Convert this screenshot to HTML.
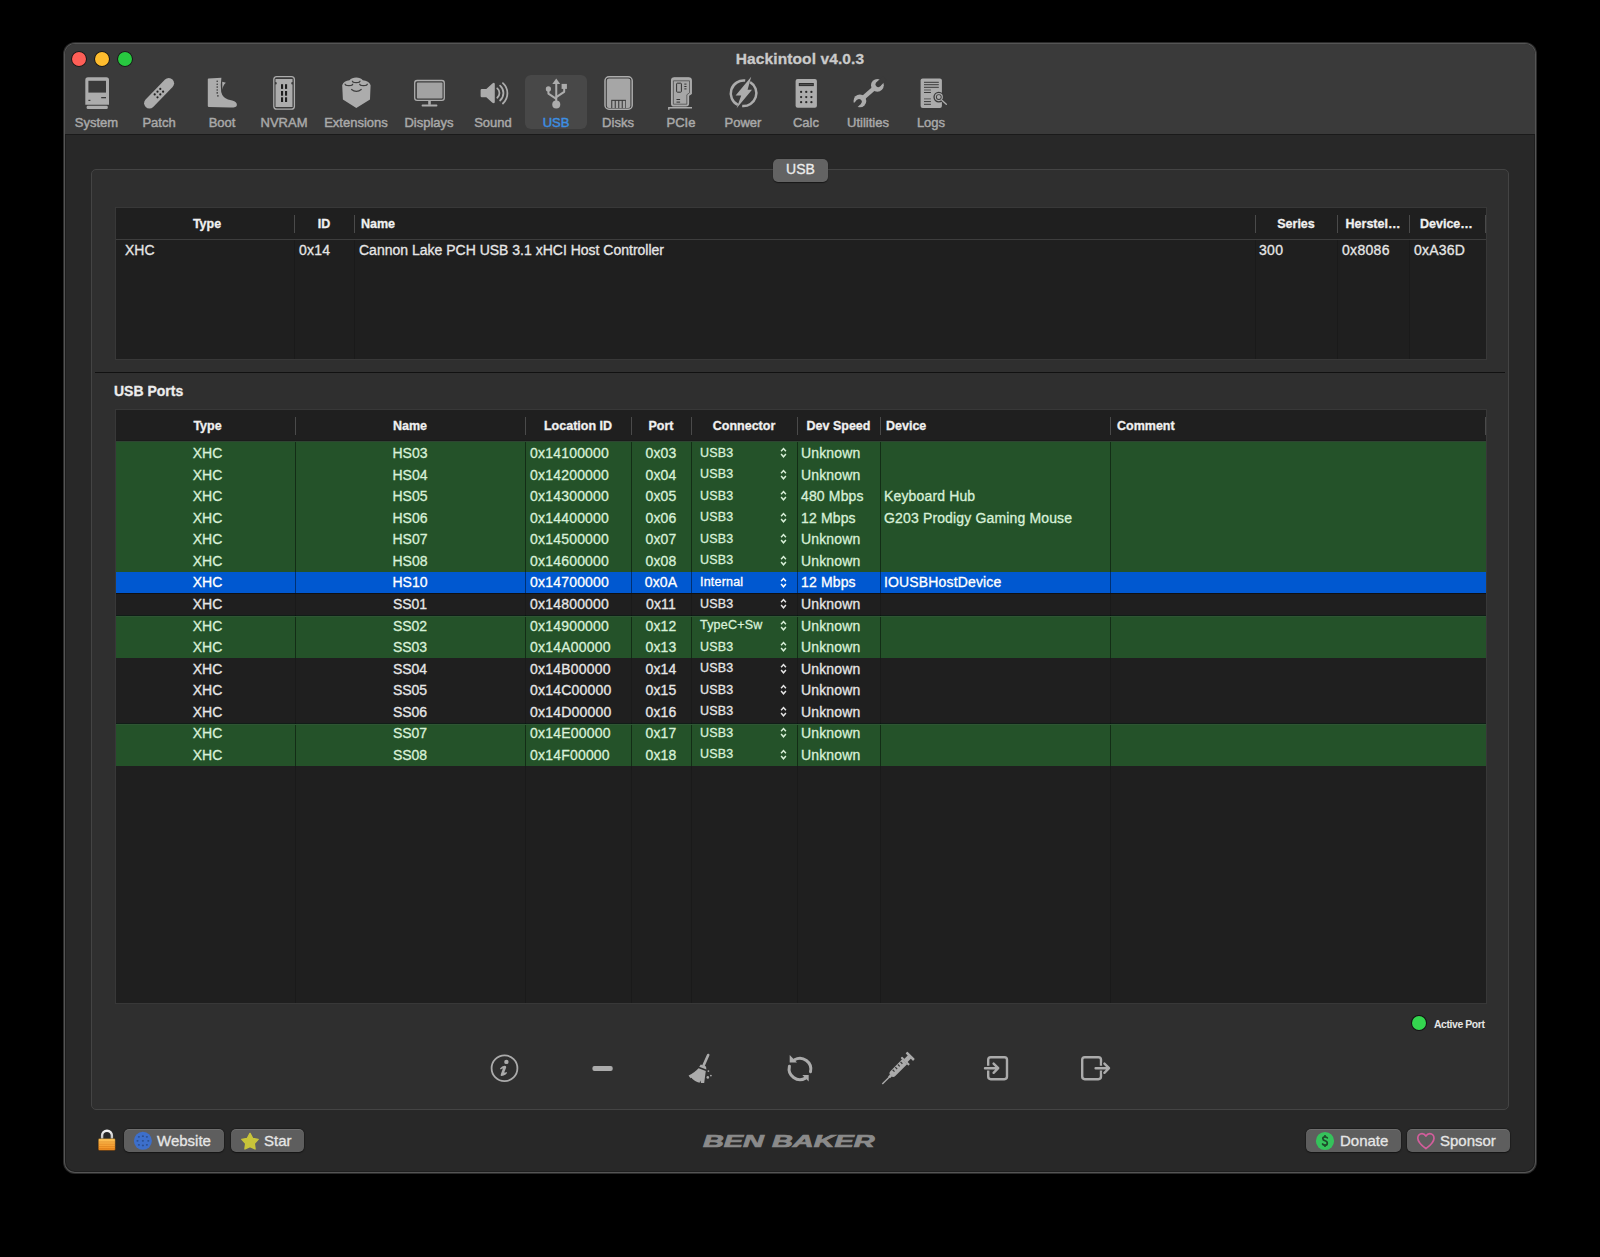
<!DOCTYPE html>
<html><head><meta charset="utf-8"><title>Hackintool</title><style>
*{box-sizing:border-box;margin:0;padding:0}
html,body{width:1600px;height:1257px;overflow:hidden;background:#000;font-family:"Liberation Sans", sans-serif}
.a{position:absolute}
.t{position:absolute;white-space:nowrap;line-height:1;-webkit-text-stroke:0.3px currentColor}
</style></head>
<body>
<div class="a" style="left:64px;top:43px;width:1472px;height:1130px;border-radius:11px;background:#282828;box-shadow:0 0 0 1px #2a2a2a,inset 0 0 0 1px #555,inset 0 0 0 2px #1e1e1e;overflow:hidden"><div class="a" style="left:1px;top:1px;width:1470px;height:90px;background:#3a3a3a;border-radius:10px 10px 0 0"></div><div class="a" style="left:1px;top:91px;width:1470px;height:1px;background:#1a1a1a"></div></div><div class="a" style="left:72.2px;top:52px;width:14px;height:14px;border-radius:50%;background:#fe5f57;box-shadow:0 0 0 0.8px rgba(0,0,0,.7)"></div><div class="a" style="left:95.1px;top:52px;width:14px;height:14px;border-radius:50%;background:#febc2e;box-shadow:0 0 0 0.8px rgba(0,0,0,.7)"></div><div class="a" style="left:117.9px;top:52px;width:14px;height:14px;border-radius:50%;background:#28c840;box-shadow:0 0 0 0.8px rgba(0,0,0,.7)"></div><div class="t" style="left:0;width:1600px;text-align:center;top:50.5px;font-size:15.5px;font-weight:700;color:#cacaca;letter-spacing:0.1px">Hackintool v4.0.3</div><div class="a" style="left:525px;top:75px;width:62px;height:54px;border-radius:6px;background:#484848"></div><div class="t" style="left:36.5px;width:120px;text-align:center;top:116.2px;font-size:13px;color:#a9a9a9;-webkit-text-stroke:0.45px #a9a9a9">System</div><div class="t" style="left:99px;width:120px;text-align:center;top:116.2px;font-size:13px;color:#a9a9a9;-webkit-text-stroke:0.45px #a9a9a9">Patch</div><div class="t" style="left:162px;width:120px;text-align:center;top:116.2px;font-size:13px;color:#a9a9a9;-webkit-text-stroke:0.45px #a9a9a9">Boot</div><div class="t" style="left:224px;width:120px;text-align:center;top:116.2px;font-size:13px;color:#a9a9a9;-webkit-text-stroke:0.45px #a9a9a9">NVRAM</div><div class="t" style="left:296px;width:120px;text-align:center;top:116.2px;font-size:13px;color:#a9a9a9;-webkit-text-stroke:0.45px #a9a9a9">Extensions</div><div class="t" style="left:369px;width:120px;text-align:center;top:116.2px;font-size:13px;color:#a9a9a9;-webkit-text-stroke:0.45px #a9a9a9">Displays</div><div class="t" style="left:433px;width:120px;text-align:center;top:116.2px;font-size:13px;color:#a9a9a9;-webkit-text-stroke:0.45px #a9a9a9">Sound</div><div class="t" style="left:496px;width:120px;text-align:center;top:116.2px;font-size:13px;color:#3d8fe3;-webkit-text-stroke:0.45px #3d8fe3">USB</div><div class="t" style="left:558px;width:120px;text-align:center;top:116.2px;font-size:13px;color:#a9a9a9;-webkit-text-stroke:0.45px #a9a9a9">Disks</div><div class="t" style="left:621px;width:120px;text-align:center;top:116.2px;font-size:13px;color:#a9a9a9;-webkit-text-stroke:0.45px #a9a9a9">PCIe</div><div class="t" style="left:683px;width:120px;text-align:center;top:116.2px;font-size:13px;color:#a9a9a9;-webkit-text-stroke:0.45px #a9a9a9">Power</div><div class="t" style="left:746px;width:120px;text-align:center;top:116.2px;font-size:13px;color:#a9a9a9;-webkit-text-stroke:0.45px #a9a9a9">Calc</div><div class="t" style="left:808px;width:120px;text-align:center;top:116.2px;font-size:13px;color:#a9a9a9;-webkit-text-stroke:0.45px #a9a9a9">Utilities</div><div class="t" style="left:871px;width:120px;text-align:center;top:116.2px;font-size:13px;color:#a9a9a9;-webkit-text-stroke:0.45px #a9a9a9">Logs</div><svg class="a" style="left:0;top:0" width="1600" height="140" viewBox="0 0 1600 140"><path d="M85.3,80 Q85.3,77.3 88,77.3 L106.3,77.3 Q109,77.3 109,80 L109,104.8 L85.3,104.8 Z" fill="#acacac"/><rect x="88.4" y="80.8" width="17.6" height="11.8" fill="#3a3a3a"/><rect x="88.4" y="99.8" width="2" height="1.2" fill="#3a3a3a"/><rect x="101.2" y="97" width="4.8" height="1.3" fill="#3a3a3a"/><rect x="86.6" y="105.8" width="21.2" height="3.2" rx="1.3" fill="#acacac"/><line x1="149.4" y1="103.2" x2="168.8" y2="83.3" stroke="#acacac" stroke-width="10.6" stroke-linecap="round"/><circle cx="160.3" cy="88.9" r="1.1" fill="#222"/><circle cx="157.5" cy="91.7" r="1.1" fill="#222"/><circle cx="163.1" cy="91.7" r="1.1" fill="#222"/><circle cx="154.7" cy="94.4" r="1.1" fill="#222"/><circle cx="160.3" cy="94.4" r="1.1" fill="#222"/><circle cx="157.5" cy="97.3" r="1.1" fill="#222"/><path d="M208.6,78.4 L221.4,77.8 Q220.2,86 221.2,92 Q222.6,97.6 228,99.4 L232.2,100.6 Q237,102 236.9,105 Q236.8,107.8 230,107.6 L209,107.1 Q207.8,107 207.8,106 L207.8,79.3 Q207.8,78.5 208.6,78.4 Z" fill="#acacac"/><path d="M222.2,81.8 L225.9,82.8 C223.9,84.4 222.8,86.8 222.4,89.8 Z" fill="#acacac"/><circle cx="217.2" cy="81.3" r="0.8" fill="#3a3a3a"/><circle cx="217.2" cy="84.2" r="0.8" fill="#3a3a3a"/><circle cx="217.2" cy="87.1" r="0.8" fill="#3a3a3a"/><circle cx="217.2" cy="90" r="0.8" fill="#3a3a3a"/><circle cx="217.2" cy="92.9" r="0.8" fill="#3a3a3a"/><circle cx="217.89999999999998" cy="95.9" r="0.8" fill="#3a3a3a"/><rect x="273.8" y="76.6" width="20.6" height="32.6" rx="3" fill="none" stroke="#acacac" stroke-width="1.3"/><path d="M275.5,79 L292.5,79 L292.5,82 A1.3,1.3 0 0 0 292.5,84.6 L292.5,107 L275.5,107 L275.5,84.6 A1.3,1.3 0 0 0 275.5,82 Z" fill="#acacac"/><rect x="281" y="84.2" width="2.1" height="4.7" fill="#1e1e1e"/><rect x="285" y="84.2" width="2.1" height="4.7" fill="#1e1e1e"/><rect x="281" y="91" width="2.1" height="4.7" fill="#1e1e1e"/><rect x="285" y="91" width="2.1" height="4.7" fill="#1e1e1e"/><rect x="281" y="97.3" width="2.1" height="4.7" fill="#1e1e1e"/><rect x="285" y="97.3" width="2.1" height="4.7" fill="#1e1e1e"/><path d="M342.2,85.3 C343,82.5 346,80.6 349.5,80.3 C351,78.6 353.5,77.6 356.2,77.6 C359,77.6 361.4,78.6 362.8,80.3 C366.5,80.6 369.8,82.5 370.6,85.3 L370,99.4 L356.3,108 L342.9,99.4 Z" fill="#acacac"/><path d="M352.3,80.8 A3.9,1.9 0 0 0 360.09999999999997,80.8" fill="none" stroke="#3e3e3e" stroke-width="1.2"/><path d="M345.0,83.8 A3.9,1.9 0 0 0 352.79999999999995,83.8" fill="none" stroke="#3e3e3e" stroke-width="1.2"/><path d="M359.6,83.8 A3.9,1.9 0 0 0 367.4,83.8" fill="none" stroke="#3e3e3e" stroke-width="1.2"/><path d="M351.2,89.2 Q356.4,93.4 361.6,89.2" fill="none" stroke="#3e3e3e" stroke-width="1.2"/><rect x="414.7" y="80.5" width="29.6" height="19.8" rx="2.4" fill="none" stroke="#acacac" stroke-width="1.3"/><rect x="416.9" y="82.6" width="25.6" height="15.9" rx="0.8" fill="#a2a2a2"/><rect x="428.2" y="100.8" width="2.6" height="4" fill="#acacac"/><rect x="421.6" y="104.6" width="15.8" height="1.9" rx="0.8" fill="#acacac"/><path d="M481.8,88.9 L486.3,88.9 L492.4,83.4 Q494.5,82 494.8,84 L494.8,102 Q494.5,104 492.4,102.8 L486.3,97.3 L481.8,97.3 Q480.6,97.3 480.6,96 L480.6,90.2 Q480.6,88.9 481.8,88.9 Z" fill="#acacac"/><path d="M497.3,88.4 A6.1,6.1 0 0 1 497.3,97.7" fill="none" stroke="#acacac" stroke-width="1.8" stroke-linecap="round"/><path d="M500.1,85.6 A10,10 0 0 1 500.1,100.5" fill="none" stroke="#acacac" stroke-width="1.8" stroke-linecap="round"/><path d="M502.9,83.2 A13.7,13.7 0 0 1 502.9,103.5" fill="none" stroke="#acacac" stroke-width="1.8" stroke-linecap="round"/><path d="M556.25,78.6 L560.2,84.1 L552.3,84.1 Z" fill="#acacac"/><line x1="556.25" y1="83.5" x2="556.25" y2="102" stroke="#acacac" stroke-width="2"/><circle cx="556.25" cy="104.6" r="4" fill="#acacac"/><circle cx="548.4" cy="88.9" r="2.6" fill="#acacac"/><path d="M548.4,90 L548.4,93.6 L556.25,98.8" fill="none" stroke="#acacac" stroke-width="2" stroke-linejoin="round"/><rect x="561.6" y="83.9" width="5.3" height="5" fill="#acacac"/><path d="M564.2,88 L564.2,91.8 L556.25,97.2" fill="none" stroke="#acacac" stroke-width="2" stroke-linejoin="round"/><rect x="605" y="76.8" width="27.2" height="32.4" rx="4" fill="none" stroke="#acacac" stroke-width="1.5"/><rect x="606.8" y="78.6" width="23.6" height="29.4" rx="2.2" fill="#a6a6a6"/><rect x="611.2" y="99.8" width="14.7" height="8.3" fill="#3c3c3c"/><rect x="612.3" y="100.9" width="2.4" height="7.2" fill="#a6a6a6"/><rect x="615.8" y="100.9" width="2.4" height="7.2" fill="#a6a6a6"/><rect x="619.3" y="100.9" width="2.4" height="7.2" fill="#a6a6a6"/><rect x="622.8" y="100.9" width="2.4" height="7.2" fill="#a6a6a6"/><path d="M671.6,80.5 Q671.6,77.8 674.3,77.8 L688.6,77.8 Q691.3,77.8 691.3,80.5 L691.3,93.6 L688.5,95.6 L688.5,103.6 Q688.5,106 686,106 L674.3,106 Q671.6,106 671.6,103.4 Z" fill="#a6a6a6" stroke="#acacac" stroke-width="1.2"/><path d="M673.4,80.8 L689.5,80.8 L689.5,92.8 L686.8,94.8 L686.8,104.2 L673.4,104.2 Z" fill="none" stroke="#444" stroke-width="0.7"/><rect x="676.6" y="83.2" width="4.8" height="9" rx="0.8" fill="none" stroke="#333" stroke-width="1"/><rect x="684.3" y="83.6" width="2.2" height="1" fill="#333"/><rect x="684.3" y="86" width="2.2" height="1" fill="#333"/><rect x="684.3" y="88.4" width="2.2" height="1" fill="#333"/><rect x="676.5" y="99" width="3.6" height="1" fill="#333"/><rect x="676.5" y="101.6" width="3.6" height="1" fill="#333"/><path d="M668.8,109.8 L668.8,107.8 L692,107.8" fill="none" stroke="#acacac" stroke-width="1.4"/><path d="M745.2,80.6 A12.9,12.9 0 0 0 737.8,104.9" fill="none" stroke="#acacac" stroke-width="2.5"/><path d="M742.2,106 A12.9,12.9 0 0 0 750.1,82.1" fill="none" stroke="#acacac" stroke-width="2.5"/><path d="M751.2,76.8 L735.6,95.6 L741.2,95.6 L736.6,108.2 L752,89.8 L747.6,89.8 Z" fill="#acacac"/><rect x="795.6" y="78.9" width="21.3" height="28.8" rx="2" fill="#acacac"/><rect x="798.8" y="83" width="15" height="3.1" fill="#2e2e2e"/><rect x="799.8" y="84" width="13" height="1.1" fill="#505050"/><circle cx="801.1" cy="91.9" r="1.15" fill="#2a2a2a"/><circle cx="806.25" cy="91.9" r="1.15" fill="#2a2a2a"/><circle cx="811.4" cy="91.9" r="1.15" fill="#2a2a2a"/><circle cx="801.1" cy="97.1" r="1.15" fill="#2a2a2a"/><circle cx="806.25" cy="97.1" r="1.15" fill="#2a2a2a"/><circle cx="811.4" cy="97.1" r="1.15" fill="#2a2a2a"/><circle cx="801.1" cy="102.2" r="1.15" fill="#2a2a2a"/><circle cx="806.25" cy="102.2" r="1.15" fill="#2a2a2a"/><circle cx="811.4" cy="102.2" r="1.15" fill="#2a2a2a"/><line x1="860" y1="100.7" x2="877.2" y2="85.6" stroke="#acacac" stroke-width="4.4"/><circle cx="877.4" cy="85.3" r="6.4" fill="#acacac"/><circle cx="859.9" cy="100.9" r="6.4" fill="#acacac"/><g transform="translate(877.4,85.3) rotate(-45)"><circle cx="1.2" cy="0" r="2.7" fill="#3a3a3a"/><rect x="1.2" y="-2.7" width="9" height="5.4" fill="#3a3a3a"/></g><g transform="translate(859.9,100.9) rotate(135)"><circle cx="1.2" cy="0" r="2.7" fill="#3a3a3a"/><rect x="1.2" y="-2.7" width="9" height="5.4" fill="#3a3a3a"/></g><rect x="920.6" y="78.5" width="21.3" height="29.6" rx="2" fill="#acacac"/><rect x="924" y="81.8" width="14.8" height="1" fill="#3a3a3a"/><rect x="924" y="84.2" width="14.8" height="1" fill="#3a3a3a"/><rect x="924" y="86.8" width="14.8" height="1" fill="#3a3a3a"/><rect x="924" y="92.0" width="6.9" height="1" fill="#3a3a3a"/><rect x="924" y="101.1" width="6.9" height="1" fill="#3a3a3a"/><rect x="924" y="103.8" width="6.9" height="1" fill="#3a3a3a"/><rect x="924" y="89.2" width="6.9" height="1.6" fill="#777"/><rect x="924" y="98.0" width="6.9" height="1.6" fill="#777"/><circle cx="938.8" cy="97.1" r="5.4" fill="#3a3a3a"/><circle cx="938.8" cy="97.1" r="4.1" fill="#acacac"/><circle cx="938.8" cy="97.1" r="2.9" fill="#3a3a3a"/><circle cx="938.8" cy="97.1" r="2" fill="#acacac"/><line x1="941.7" y1="100" x2="946.3" y2="104.2" stroke="#3a3a3a" stroke-width="3"/><line x1="941.9" y1="100.2" x2="946.3" y2="104.2" stroke="#acacac" stroke-width="1.4" stroke-linecap="round"/></svg><div class="a" style="left:91px;top:169px;width:1418px;height:941px;border:1px solid #444;border-radius:5px;background:#2f2f2f"></div><div class="a" style="left:773px;top:159px;width:55px;height:23px;border-radius:5px;background:#636363;box-shadow:0 0.5px 1px rgba(0,0,0,.5)"></div><div class="t" style="left:773px;width:55px;text-align:center;top:162px;font-size:14px;color:#ececec">USB</div><div class="a" style="left:116px;top:208px;width:1370px;height:151px;background:#1f1f1f;box-shadow:0 0 0 1px #383838"></div><div class="a" style="left:294px;top:240px;width:1px;height:119px;background:#1a1a1a"></div><div class="a" style="left:354px;top:240px;width:1px;height:119px;background:#1a1a1a"></div><div class="a" style="left:1255px;top:240px;width:1px;height:119px;background:#1a1a1a"></div><div class="a" style="left:1337px;top:240px;width:1px;height:119px;background:#1a1a1a"></div><div class="a" style="left:1409px;top:240px;width:1px;height:119px;background:#1a1a1a"></div><div class="t" style="top:243.10px;color:#e6e6e6;left:125px;font-size:14px">XHC</div><div class="t" style="top:243.10px;color:#e6e6e6;left:299px;font-size:14px;letter-spacing:0.2px">0x14</div><div class="t" style="top:243.10px;color:#e6e6e6;left:359px;font-size:14px">Cannon Lake PCH USB 3.1 xHCI Host Controller</div><div class="t" style="top:243.10px;color:#e6e6e6;left:1259px;font-size:14px;letter-spacing:0.3px">300</div><div class="t" style="top:243.10px;color:#e6e6e6;left:1342px;font-size:14px;letter-spacing:0.3px">0x8086</div><div class="t" style="top:243.10px;color:#e6e6e6;left:1414px;font-size:14px;letter-spacing:0.2px">0xA36D</div><div class="a" style="left:116px;top:208px;width:1370px;height:32px;background:#1f1f1f"></div><div class="a" style="left:116px;top:239px;width:1370px;height:1px;background:#3d3d3d"></div><div class="t" style="left:118px;width:178px;text-align:center;top:218px;font-size:12.5px;font-weight:700;color:#f0f0f0">Type</div><div class="a" style="left:294px;top:215px;width:1px;height:18px;background:#4a4a4a"></div><div class="t" style="left:294px;width:60px;text-align:center;top:218px;font-size:12.5px;font-weight:700;color:#f0f0f0">ID</div><div class="a" style="left:354px;top:215px;width:1px;height:18px;background:#4a4a4a"></div><div class="t" style="left:361px;top:218px;font-size:12.5px;font-weight:700;color:#f0f0f0">Name</div><div class="a" style="left:1255px;top:215px;width:1px;height:18px;background:#4a4a4a"></div><div class="t" style="left:1255px;width:82px;text-align:center;top:218px;font-size:12.5px;font-weight:700;color:#f0f0f0">Series</div><div class="a" style="left:1337px;top:215px;width:1px;height:18px;background:#4a4a4a"></div><div class="t" style="left:1337px;width:72px;text-align:center;top:218px;font-size:12.5px;font-weight:700;color:#f0f0f0">Herstel…</div><div class="a" style="left:1409px;top:215px;width:1px;height:18px;background:#4a4a4a"></div><div class="t" style="left:1420px;top:218px;font-size:12.5px;font-weight:700;color:#f0f0f0">Device…</div><div class="a" style="left:1485px;top:215px;width:1px;height:18px;background:#4a4a4a"></div><div class="a" style="left:95px;top:372px;width:1410px;height:1px;background:#111"></div><div class="t" style="left:114px;top:384px;font-size:14px;font-weight:700;color:#ececec">USB Ports</div><div class="a" style="left:116px;top:410px;width:1370px;height:593px;background:#1f1f1f;box-shadow:0 0 0 1px #383838"></div><div class="a" style="left:295px;top:441px;width:1px;height:562px;background:#1a1a1a"></div><div class="a" style="left:525px;top:441px;width:1px;height:562px;background:#1a1a1a"></div><div class="a" style="left:631px;top:441px;width:1px;height:562px;background:#1a1a1a"></div><div class="a" style="left:691px;top:441px;width:1px;height:562px;background:#1a1a1a"></div><div class="a" style="left:797px;top:441px;width:1px;height:562px;background:#1a1a1a"></div><div class="a" style="left:880px;top:441px;width:1px;height:562px;background:#1a1a1a"></div><div class="a" style="left:1110px;top:441px;width:1px;height:562px;background:#1a1a1a"></div><div class="a" style="left:116px;top:442.00px;width:1370px;height:21.60px;background:#245229"></div><div class="a" style="left:295px;top:442.00px;width:1px;height:21.60px;background:rgba(0,0,0,.45)"></div><div class="a" style="left:525px;top:442.00px;width:1px;height:21.60px;background:rgba(0,0,0,.45)"></div><div class="a" style="left:631px;top:442.00px;width:1px;height:21.60px;background:rgba(0,0,0,.45)"></div><div class="a" style="left:691px;top:442.00px;width:1px;height:21.60px;background:rgba(0,0,0,.45)"></div><div class="a" style="left:797px;top:442.00px;width:1px;height:21.60px;background:rgba(0,0,0,.45)"></div><div class="a" style="left:880px;top:442.00px;width:1px;height:21.60px;background:rgba(0,0,0,.45)"></div><div class="a" style="left:1110px;top:442.00px;width:1px;height:21.60px;background:rgba(0,0,0,.45)"></div><div class="t" style="top:446.10px;color:#d8f0d8;left:116px;width:183px;text-align:center;font-size:14px">XHC</div><div class="t" style="top:446.10px;color:#d8f0d8;left:295px;width:230px;text-align:center;font-size:14px">HS03</div><div class="t" style="top:446.10px;color:#d8f0d8;left:530px;font-size:14px;letter-spacing:0.2px">0x14100000</div><div class="t" style="top:446.10px;color:#d8f0d8;left:631px;width:60px;text-align:center;font-size:14px;letter-spacing:0.2px">0x03</div><div class="t" style="top:446.10px;color:#d8f0d8;left:700px;font-size:12.5px;margin-top:0.5px;letter-spacing:0.2px">USB3</div><div class="t" style="top:446.10px;color:#d8f0d8;left:780px;margin-top:1.1px"><svg width="7" height="11" viewBox="0 0 7 11" style="display:block"><path d="M1.1 4.3 L3.5 1.6 L5.9 4.3 M1.1 7.1 L3.5 9.8 L5.9 7.1" fill="none" stroke="currentColor" stroke-width="1.5"/></svg></div><div class="t" style="top:446.10px;color:#d8f0d8;left:801px;font-size:14px;letter-spacing:0.15px">Unknown</div><div class="t" style="top:446.10px;color:#d8f0d8;left:884px;font-size:14px;letter-spacing:0.15px"></div><div class="a" style="left:116px;top:463.60px;width:1370px;height:21.60px;background:#245229"></div><div class="a" style="left:295px;top:463.60px;width:1px;height:21.60px;background:rgba(0,0,0,.45)"></div><div class="a" style="left:525px;top:463.60px;width:1px;height:21.60px;background:rgba(0,0,0,.45)"></div><div class="a" style="left:631px;top:463.60px;width:1px;height:21.60px;background:rgba(0,0,0,.45)"></div><div class="a" style="left:691px;top:463.60px;width:1px;height:21.60px;background:rgba(0,0,0,.45)"></div><div class="a" style="left:797px;top:463.60px;width:1px;height:21.60px;background:rgba(0,0,0,.45)"></div><div class="a" style="left:880px;top:463.60px;width:1px;height:21.60px;background:rgba(0,0,0,.45)"></div><div class="a" style="left:1110px;top:463.60px;width:1px;height:21.60px;background:rgba(0,0,0,.45)"></div><div class="t" style="top:467.66px;color:#d8f0d8;left:116px;width:183px;text-align:center;font-size:14px">XHC</div><div class="t" style="top:467.66px;color:#d8f0d8;left:295px;width:230px;text-align:center;font-size:14px">HS04</div><div class="t" style="top:467.66px;color:#d8f0d8;left:530px;font-size:14px;letter-spacing:0.2px">0x14200000</div><div class="t" style="top:467.66px;color:#d8f0d8;left:631px;width:60px;text-align:center;font-size:14px;letter-spacing:0.2px">0x04</div><div class="t" style="top:467.66px;color:#d8f0d8;left:700px;font-size:12.5px;margin-top:0.5px;letter-spacing:0.2px">USB3</div><div class="t" style="top:467.66px;color:#d8f0d8;left:780px;margin-top:1.1px"><svg width="7" height="11" viewBox="0 0 7 11" style="display:block"><path d="M1.1 4.3 L3.5 1.6 L5.9 4.3 M1.1 7.1 L3.5 9.8 L5.9 7.1" fill="none" stroke="currentColor" stroke-width="1.5"/></svg></div><div class="t" style="top:467.66px;color:#d8f0d8;left:801px;font-size:14px;letter-spacing:0.15px">Unknown</div><div class="t" style="top:467.66px;color:#d8f0d8;left:884px;font-size:14px;letter-spacing:0.15px"></div><div class="a" style="left:116px;top:485.20px;width:1370px;height:21.60px;background:#245229"></div><div class="a" style="left:295px;top:485.20px;width:1px;height:21.60px;background:rgba(0,0,0,.45)"></div><div class="a" style="left:525px;top:485.20px;width:1px;height:21.60px;background:rgba(0,0,0,.45)"></div><div class="a" style="left:631px;top:485.20px;width:1px;height:21.60px;background:rgba(0,0,0,.45)"></div><div class="a" style="left:691px;top:485.20px;width:1px;height:21.60px;background:rgba(0,0,0,.45)"></div><div class="a" style="left:797px;top:485.20px;width:1px;height:21.60px;background:rgba(0,0,0,.45)"></div><div class="a" style="left:880px;top:485.20px;width:1px;height:21.60px;background:rgba(0,0,0,.45)"></div><div class="a" style="left:1110px;top:485.20px;width:1px;height:21.60px;background:rgba(0,0,0,.45)"></div><div class="t" style="top:489.22px;color:#d8f0d8;left:116px;width:183px;text-align:center;font-size:14px">XHC</div><div class="t" style="top:489.22px;color:#d8f0d8;left:295px;width:230px;text-align:center;font-size:14px">HS05</div><div class="t" style="top:489.22px;color:#d8f0d8;left:530px;font-size:14px;letter-spacing:0.2px">0x14300000</div><div class="t" style="top:489.22px;color:#d8f0d8;left:631px;width:60px;text-align:center;font-size:14px;letter-spacing:0.2px">0x05</div><div class="t" style="top:489.22px;color:#d8f0d8;left:700px;font-size:12.5px;margin-top:0.5px;letter-spacing:0.2px">USB3</div><div class="t" style="top:489.22px;color:#d8f0d8;left:780px;margin-top:1.1px"><svg width="7" height="11" viewBox="0 0 7 11" style="display:block"><path d="M1.1 4.3 L3.5 1.6 L5.9 4.3 M1.1 7.1 L3.5 9.8 L5.9 7.1" fill="none" stroke="currentColor" stroke-width="1.5"/></svg></div><div class="t" style="top:489.22px;color:#d8f0d8;left:801px;font-size:14px;letter-spacing:0.15px">480 Mbps</div><div class="t" style="top:489.22px;color:#d8f0d8;left:884px;font-size:14px;letter-spacing:0.15px">Keyboard Hub</div><div class="a" style="left:116px;top:506.80px;width:1370px;height:21.60px;background:#245229"></div><div class="a" style="left:295px;top:506.80px;width:1px;height:21.60px;background:rgba(0,0,0,.45)"></div><div class="a" style="left:525px;top:506.80px;width:1px;height:21.60px;background:rgba(0,0,0,.45)"></div><div class="a" style="left:631px;top:506.80px;width:1px;height:21.60px;background:rgba(0,0,0,.45)"></div><div class="a" style="left:691px;top:506.80px;width:1px;height:21.60px;background:rgba(0,0,0,.45)"></div><div class="a" style="left:797px;top:506.80px;width:1px;height:21.60px;background:rgba(0,0,0,.45)"></div><div class="a" style="left:880px;top:506.80px;width:1px;height:21.60px;background:rgba(0,0,0,.45)"></div><div class="a" style="left:1110px;top:506.80px;width:1px;height:21.60px;background:rgba(0,0,0,.45)"></div><div class="t" style="top:510.78px;color:#d8f0d8;left:116px;width:183px;text-align:center;font-size:14px">XHC</div><div class="t" style="top:510.78px;color:#d8f0d8;left:295px;width:230px;text-align:center;font-size:14px">HS06</div><div class="t" style="top:510.78px;color:#d8f0d8;left:530px;font-size:14px;letter-spacing:0.2px">0x14400000</div><div class="t" style="top:510.78px;color:#d8f0d8;left:631px;width:60px;text-align:center;font-size:14px;letter-spacing:0.2px">0x06</div><div class="t" style="top:510.78px;color:#d8f0d8;left:700px;font-size:12.5px;margin-top:0.5px;letter-spacing:0.2px">USB3</div><div class="t" style="top:510.78px;color:#d8f0d8;left:780px;margin-top:1.1px"><svg width="7" height="11" viewBox="0 0 7 11" style="display:block"><path d="M1.1 4.3 L3.5 1.6 L5.9 4.3 M1.1 7.1 L3.5 9.8 L5.9 7.1" fill="none" stroke="currentColor" stroke-width="1.5"/></svg></div><div class="t" style="top:510.78px;color:#d8f0d8;left:801px;font-size:14px;letter-spacing:0.15px">12 Mbps</div><div class="t" style="top:510.78px;color:#d8f0d8;left:884px;font-size:14px;letter-spacing:0.15px">G203 Prodigy Gaming Mouse</div><div class="a" style="left:116px;top:528.40px;width:1370px;height:21.60px;background:#245229"></div><div class="a" style="left:295px;top:528.40px;width:1px;height:21.60px;background:rgba(0,0,0,.45)"></div><div class="a" style="left:525px;top:528.40px;width:1px;height:21.60px;background:rgba(0,0,0,.45)"></div><div class="a" style="left:631px;top:528.40px;width:1px;height:21.60px;background:rgba(0,0,0,.45)"></div><div class="a" style="left:691px;top:528.40px;width:1px;height:21.60px;background:rgba(0,0,0,.45)"></div><div class="a" style="left:797px;top:528.40px;width:1px;height:21.60px;background:rgba(0,0,0,.45)"></div><div class="a" style="left:880px;top:528.40px;width:1px;height:21.60px;background:rgba(0,0,0,.45)"></div><div class="a" style="left:1110px;top:528.40px;width:1px;height:21.60px;background:rgba(0,0,0,.45)"></div><div class="t" style="top:532.34px;color:#d8f0d8;left:116px;width:183px;text-align:center;font-size:14px">XHC</div><div class="t" style="top:532.34px;color:#d8f0d8;left:295px;width:230px;text-align:center;font-size:14px">HS07</div><div class="t" style="top:532.34px;color:#d8f0d8;left:530px;font-size:14px;letter-spacing:0.2px">0x14500000</div><div class="t" style="top:532.34px;color:#d8f0d8;left:631px;width:60px;text-align:center;font-size:14px;letter-spacing:0.2px">0x07</div><div class="t" style="top:532.34px;color:#d8f0d8;left:700px;font-size:12.5px;margin-top:0.5px;letter-spacing:0.2px">USB3</div><div class="t" style="top:532.34px;color:#d8f0d8;left:780px;margin-top:1.1px"><svg width="7" height="11" viewBox="0 0 7 11" style="display:block"><path d="M1.1 4.3 L3.5 1.6 L5.9 4.3 M1.1 7.1 L3.5 9.8 L5.9 7.1" fill="none" stroke="currentColor" stroke-width="1.5"/></svg></div><div class="t" style="top:532.34px;color:#d8f0d8;left:801px;font-size:14px;letter-spacing:0.15px">Unknown</div><div class="t" style="top:532.34px;color:#d8f0d8;left:884px;font-size:14px;letter-spacing:0.15px"></div><div class="a" style="left:116px;top:550.00px;width:1370px;height:21.60px;background:#245229"></div><div class="a" style="left:295px;top:550.00px;width:1px;height:21.60px;background:rgba(0,0,0,.45)"></div><div class="a" style="left:525px;top:550.00px;width:1px;height:21.60px;background:rgba(0,0,0,.45)"></div><div class="a" style="left:631px;top:550.00px;width:1px;height:21.60px;background:rgba(0,0,0,.45)"></div><div class="a" style="left:691px;top:550.00px;width:1px;height:21.60px;background:rgba(0,0,0,.45)"></div><div class="a" style="left:797px;top:550.00px;width:1px;height:21.60px;background:rgba(0,0,0,.45)"></div><div class="a" style="left:880px;top:550.00px;width:1px;height:21.60px;background:rgba(0,0,0,.45)"></div><div class="a" style="left:1110px;top:550.00px;width:1px;height:21.60px;background:rgba(0,0,0,.45)"></div><div class="t" style="top:553.90px;color:#d8f0d8;left:116px;width:183px;text-align:center;font-size:14px">XHC</div><div class="t" style="top:553.90px;color:#d8f0d8;left:295px;width:230px;text-align:center;font-size:14px">HS08</div><div class="t" style="top:553.90px;color:#d8f0d8;left:530px;font-size:14px;letter-spacing:0.2px">0x14600000</div><div class="t" style="top:553.90px;color:#d8f0d8;left:631px;width:60px;text-align:center;font-size:14px;letter-spacing:0.2px">0x08</div><div class="t" style="top:553.90px;color:#d8f0d8;left:700px;font-size:12.5px;margin-top:0.5px;letter-spacing:0.2px">USB3</div><div class="t" style="top:553.90px;color:#d8f0d8;left:780px;margin-top:1.1px"><svg width="7" height="11" viewBox="0 0 7 11" style="display:block"><path d="M1.1 4.3 L3.5 1.6 L5.9 4.3 M1.1 7.1 L3.5 9.8 L5.9 7.1" fill="none" stroke="currentColor" stroke-width="1.5"/></svg></div><div class="t" style="top:553.90px;color:#d8f0d8;left:801px;font-size:14px;letter-spacing:0.15px">Unknown</div><div class="t" style="top:553.90px;color:#d8f0d8;left:884px;font-size:14px;letter-spacing:0.15px"></div><div class="a" style="left:116px;top:571.60px;width:1370px;height:21.60px;background:#0058d0"></div><div class="a" style="left:295px;top:571.60px;width:1px;height:21.60px;background:rgba(0,0,0,.45)"></div><div class="a" style="left:525px;top:571.60px;width:1px;height:21.60px;background:rgba(0,0,0,.45)"></div><div class="a" style="left:631px;top:571.60px;width:1px;height:21.60px;background:rgba(0,0,0,.45)"></div><div class="a" style="left:691px;top:571.60px;width:1px;height:21.60px;background:rgba(0,0,0,.45)"></div><div class="a" style="left:797px;top:571.60px;width:1px;height:21.60px;background:rgba(0,0,0,.45)"></div><div class="a" style="left:880px;top:571.60px;width:1px;height:21.60px;background:rgba(0,0,0,.45)"></div><div class="a" style="left:1110px;top:571.60px;width:1px;height:21.60px;background:rgba(0,0,0,.45)"></div><div class="t" style="top:575.46px;color:#ffffff;left:116px;width:183px;text-align:center;font-size:14px">XHC</div><div class="t" style="top:575.46px;color:#ffffff;left:295px;width:230px;text-align:center;font-size:14px">HS10</div><div class="t" style="top:575.46px;color:#ffffff;left:530px;font-size:14px;letter-spacing:0.2px">0x14700000</div><div class="t" style="top:575.46px;color:#ffffff;left:631px;width:60px;text-align:center;font-size:14px;letter-spacing:0.2px">0x0A</div><div class="t" style="top:575.46px;color:#ffffff;left:700px;font-size:12.5px;margin-top:0.5px;letter-spacing:0.2px">Internal</div><div class="t" style="top:575.46px;color:#ffffff;left:780px;margin-top:1.1px"><svg width="7" height="11" viewBox="0 0 7 11" style="display:block"><path d="M1.1 4.3 L3.5 1.6 L5.9 4.3 M1.1 7.1 L3.5 9.8 L5.9 7.1" fill="none" stroke="currentColor" stroke-width="1.5"/></svg></div><div class="t" style="top:575.46px;color:#ffffff;left:801px;font-size:14px;letter-spacing:0.15px">12 Mbps</div><div class="t" style="top:575.46px;color:#ffffff;left:884px;font-size:14px;letter-spacing:0.15px">IOUSBHostDevice</div><div class="t" style="top:597.02px;color:#e6e6e6;left:116px;width:183px;text-align:center;font-size:14px">XHC</div><div class="t" style="top:597.02px;color:#e6e6e6;left:295px;width:230px;text-align:center;font-size:14px">SS01</div><div class="t" style="top:597.02px;color:#e6e6e6;left:530px;font-size:14px;letter-spacing:0.2px">0x14800000</div><div class="t" style="top:597.02px;color:#e6e6e6;left:631px;width:60px;text-align:center;font-size:14px;letter-spacing:0.2px">0x11</div><div class="t" style="top:597.02px;color:#e6e6e6;left:700px;font-size:12.5px;margin-top:0.5px;letter-spacing:0.2px">USB3</div><div class="t" style="top:597.02px;color:#e6e6e6;left:780px;margin-top:1.1px"><svg width="7" height="11" viewBox="0 0 7 11" style="display:block"><path d="M1.1 4.3 L3.5 1.6 L5.9 4.3 M1.1 7.1 L3.5 9.8 L5.9 7.1" fill="none" stroke="currentColor" stroke-width="1.5"/></svg></div><div class="t" style="top:597.02px;color:#e6e6e6;left:801px;font-size:14px;letter-spacing:0.15px">Unknown</div><div class="t" style="top:597.02px;color:#e6e6e6;left:884px;font-size:14px;letter-spacing:0.15px"></div><div class="a" style="left:116px;top:614.80px;width:1370px;height:21.60px;background:#245229"></div><div class="a" style="left:295px;top:614.80px;width:1px;height:21.60px;background:rgba(0,0,0,.45)"></div><div class="a" style="left:525px;top:614.80px;width:1px;height:21.60px;background:rgba(0,0,0,.45)"></div><div class="a" style="left:631px;top:614.80px;width:1px;height:21.60px;background:rgba(0,0,0,.45)"></div><div class="a" style="left:691px;top:614.80px;width:1px;height:21.60px;background:rgba(0,0,0,.45)"></div><div class="a" style="left:797px;top:614.80px;width:1px;height:21.60px;background:rgba(0,0,0,.45)"></div><div class="a" style="left:880px;top:614.80px;width:1px;height:21.60px;background:rgba(0,0,0,.45)"></div><div class="a" style="left:1110px;top:614.80px;width:1px;height:21.60px;background:rgba(0,0,0,.45)"></div><div class="t" style="top:618.58px;color:#d8f0d8;left:116px;width:183px;text-align:center;font-size:14px">XHC</div><div class="t" style="top:618.58px;color:#d8f0d8;left:295px;width:230px;text-align:center;font-size:14px">SS02</div><div class="t" style="top:618.58px;color:#d8f0d8;left:530px;font-size:14px;letter-spacing:0.2px">0x14900000</div><div class="t" style="top:618.58px;color:#d8f0d8;left:631px;width:60px;text-align:center;font-size:14px;letter-spacing:0.2px">0x12</div><div class="t" style="top:618.58px;color:#d8f0d8;left:700px;font-size:12.5px;margin-top:0.5px;letter-spacing:0.2px">TypeC+Sw</div><div class="t" style="top:618.58px;color:#d8f0d8;left:780px;margin-top:1.1px"><svg width="7" height="11" viewBox="0 0 7 11" style="display:block"><path d="M1.1 4.3 L3.5 1.6 L5.9 4.3 M1.1 7.1 L3.5 9.8 L5.9 7.1" fill="none" stroke="currentColor" stroke-width="1.5"/></svg></div><div class="t" style="top:618.58px;color:#d8f0d8;left:801px;font-size:14px;letter-spacing:0.15px">Unknown</div><div class="t" style="top:618.58px;color:#d8f0d8;left:884px;font-size:14px;letter-spacing:0.15px"></div><div class="a" style="left:116px;top:636.40px;width:1370px;height:21.60px;background:#245229"></div><div class="a" style="left:295px;top:636.40px;width:1px;height:21.60px;background:rgba(0,0,0,.45)"></div><div class="a" style="left:525px;top:636.40px;width:1px;height:21.60px;background:rgba(0,0,0,.45)"></div><div class="a" style="left:631px;top:636.40px;width:1px;height:21.60px;background:rgba(0,0,0,.45)"></div><div class="a" style="left:691px;top:636.40px;width:1px;height:21.60px;background:rgba(0,0,0,.45)"></div><div class="a" style="left:797px;top:636.40px;width:1px;height:21.60px;background:rgba(0,0,0,.45)"></div><div class="a" style="left:880px;top:636.40px;width:1px;height:21.60px;background:rgba(0,0,0,.45)"></div><div class="a" style="left:1110px;top:636.40px;width:1px;height:21.60px;background:rgba(0,0,0,.45)"></div><div class="t" style="top:640.14px;color:#d8f0d8;left:116px;width:183px;text-align:center;font-size:14px">XHC</div><div class="t" style="top:640.14px;color:#d8f0d8;left:295px;width:230px;text-align:center;font-size:14px">SS03</div><div class="t" style="top:640.14px;color:#d8f0d8;left:530px;font-size:14px;letter-spacing:0.2px">0x14A00000</div><div class="t" style="top:640.14px;color:#d8f0d8;left:631px;width:60px;text-align:center;font-size:14px;letter-spacing:0.2px">0x13</div><div class="t" style="top:640.14px;color:#d8f0d8;left:700px;font-size:12.5px;margin-top:0.5px;letter-spacing:0.2px">USB3</div><div class="t" style="top:640.14px;color:#d8f0d8;left:780px;margin-top:1.1px"><svg width="7" height="11" viewBox="0 0 7 11" style="display:block"><path d="M1.1 4.3 L3.5 1.6 L5.9 4.3 M1.1 7.1 L3.5 9.8 L5.9 7.1" fill="none" stroke="currentColor" stroke-width="1.5"/></svg></div><div class="t" style="top:640.14px;color:#d8f0d8;left:801px;font-size:14px;letter-spacing:0.15px">Unknown</div><div class="t" style="top:640.14px;color:#d8f0d8;left:884px;font-size:14px;letter-spacing:0.15px"></div><div class="t" style="top:661.70px;color:#e6e6e6;left:116px;width:183px;text-align:center;font-size:14px">XHC</div><div class="t" style="top:661.70px;color:#e6e6e6;left:295px;width:230px;text-align:center;font-size:14px">SS04</div><div class="t" style="top:661.70px;color:#e6e6e6;left:530px;font-size:14px;letter-spacing:0.2px">0x14B00000</div><div class="t" style="top:661.70px;color:#e6e6e6;left:631px;width:60px;text-align:center;font-size:14px;letter-spacing:0.2px">0x14</div><div class="t" style="top:661.70px;color:#e6e6e6;left:700px;font-size:12.5px;margin-top:0.5px;letter-spacing:0.2px">USB3</div><div class="t" style="top:661.70px;color:#e6e6e6;left:780px;margin-top:1.1px"><svg width="7" height="11" viewBox="0 0 7 11" style="display:block"><path d="M1.1 4.3 L3.5 1.6 L5.9 4.3 M1.1 7.1 L3.5 9.8 L5.9 7.1" fill="none" stroke="currentColor" stroke-width="1.5"/></svg></div><div class="t" style="top:661.70px;color:#e6e6e6;left:801px;font-size:14px;letter-spacing:0.15px">Unknown</div><div class="t" style="top:661.70px;color:#e6e6e6;left:884px;font-size:14px;letter-spacing:0.15px"></div><div class="t" style="top:683.26px;color:#e6e6e6;left:116px;width:183px;text-align:center;font-size:14px">XHC</div><div class="t" style="top:683.26px;color:#e6e6e6;left:295px;width:230px;text-align:center;font-size:14px">SS05</div><div class="t" style="top:683.26px;color:#e6e6e6;left:530px;font-size:14px;letter-spacing:0.2px">0x14C00000</div><div class="t" style="top:683.26px;color:#e6e6e6;left:631px;width:60px;text-align:center;font-size:14px;letter-spacing:0.2px">0x15</div><div class="t" style="top:683.26px;color:#e6e6e6;left:700px;font-size:12.5px;margin-top:0.5px;letter-spacing:0.2px">USB3</div><div class="t" style="top:683.26px;color:#e6e6e6;left:780px;margin-top:1.1px"><svg width="7" height="11" viewBox="0 0 7 11" style="display:block"><path d="M1.1 4.3 L3.5 1.6 L5.9 4.3 M1.1 7.1 L3.5 9.8 L5.9 7.1" fill="none" stroke="currentColor" stroke-width="1.5"/></svg></div><div class="t" style="top:683.26px;color:#e6e6e6;left:801px;font-size:14px;letter-spacing:0.15px">Unknown</div><div class="t" style="top:683.26px;color:#e6e6e6;left:884px;font-size:14px;letter-spacing:0.15px"></div><div class="t" style="top:704.82px;color:#e6e6e6;left:116px;width:183px;text-align:center;font-size:14px">XHC</div><div class="t" style="top:704.82px;color:#e6e6e6;left:295px;width:230px;text-align:center;font-size:14px">SS06</div><div class="t" style="top:704.82px;color:#e6e6e6;left:530px;font-size:14px;letter-spacing:0.2px">0x14D00000</div><div class="t" style="top:704.82px;color:#e6e6e6;left:631px;width:60px;text-align:center;font-size:14px;letter-spacing:0.2px">0x16</div><div class="t" style="top:704.82px;color:#e6e6e6;left:700px;font-size:12.5px;margin-top:0.5px;letter-spacing:0.2px">USB3</div><div class="t" style="top:704.82px;color:#e6e6e6;left:780px;margin-top:1.1px"><svg width="7" height="11" viewBox="0 0 7 11" style="display:block"><path d="M1.1 4.3 L3.5 1.6 L5.9 4.3 M1.1 7.1 L3.5 9.8 L5.9 7.1" fill="none" stroke="currentColor" stroke-width="1.5"/></svg></div><div class="t" style="top:704.82px;color:#e6e6e6;left:801px;font-size:14px;letter-spacing:0.15px">Unknown</div><div class="t" style="top:704.82px;color:#e6e6e6;left:884px;font-size:14px;letter-spacing:0.15px"></div><div class="a" style="left:116px;top:722.80px;width:1370px;height:21.60px;background:#245229"></div><div class="a" style="left:295px;top:722.80px;width:1px;height:21.60px;background:rgba(0,0,0,.45)"></div><div class="a" style="left:525px;top:722.80px;width:1px;height:21.60px;background:rgba(0,0,0,.45)"></div><div class="a" style="left:631px;top:722.80px;width:1px;height:21.60px;background:rgba(0,0,0,.45)"></div><div class="a" style="left:691px;top:722.80px;width:1px;height:21.60px;background:rgba(0,0,0,.45)"></div><div class="a" style="left:797px;top:722.80px;width:1px;height:21.60px;background:rgba(0,0,0,.45)"></div><div class="a" style="left:880px;top:722.80px;width:1px;height:21.60px;background:rgba(0,0,0,.45)"></div><div class="a" style="left:1110px;top:722.80px;width:1px;height:21.60px;background:rgba(0,0,0,.45)"></div><div class="t" style="top:726.38px;color:#d8f0d8;left:116px;width:183px;text-align:center;font-size:14px">XHC</div><div class="t" style="top:726.38px;color:#d8f0d8;left:295px;width:230px;text-align:center;font-size:14px">SS07</div><div class="t" style="top:726.38px;color:#d8f0d8;left:530px;font-size:14px;letter-spacing:0.2px">0x14E00000</div><div class="t" style="top:726.38px;color:#d8f0d8;left:631px;width:60px;text-align:center;font-size:14px;letter-spacing:0.2px">0x17</div><div class="t" style="top:726.38px;color:#d8f0d8;left:700px;font-size:12.5px;margin-top:0.5px;letter-spacing:0.2px">USB3</div><div class="t" style="top:726.38px;color:#d8f0d8;left:780px;margin-top:1.1px"><svg width="7" height="11" viewBox="0 0 7 11" style="display:block"><path d="M1.1 4.3 L3.5 1.6 L5.9 4.3 M1.1 7.1 L3.5 9.8 L5.9 7.1" fill="none" stroke="currentColor" stroke-width="1.5"/></svg></div><div class="t" style="top:726.38px;color:#d8f0d8;left:801px;font-size:14px;letter-spacing:0.15px">Unknown</div><div class="t" style="top:726.38px;color:#d8f0d8;left:884px;font-size:14px;letter-spacing:0.15px"></div><div class="a" style="left:116px;top:744.40px;width:1370px;height:21.60px;background:#245229"></div><div class="a" style="left:295px;top:744.40px;width:1px;height:21.60px;background:rgba(0,0,0,.45)"></div><div class="a" style="left:525px;top:744.40px;width:1px;height:21.60px;background:rgba(0,0,0,.45)"></div><div class="a" style="left:631px;top:744.40px;width:1px;height:21.60px;background:rgba(0,0,0,.45)"></div><div class="a" style="left:691px;top:744.40px;width:1px;height:21.60px;background:rgba(0,0,0,.45)"></div><div class="a" style="left:797px;top:744.40px;width:1px;height:21.60px;background:rgba(0,0,0,.45)"></div><div class="a" style="left:880px;top:744.40px;width:1px;height:21.60px;background:rgba(0,0,0,.45)"></div><div class="a" style="left:1110px;top:744.40px;width:1px;height:21.60px;background:rgba(0,0,0,.45)"></div><div class="t" style="top:747.94px;color:#d8f0d8;left:116px;width:183px;text-align:center;font-size:14px">XHC</div><div class="t" style="top:747.94px;color:#d8f0d8;left:295px;width:230px;text-align:center;font-size:14px">SS08</div><div class="t" style="top:747.94px;color:#d8f0d8;left:530px;font-size:14px;letter-spacing:0.2px">0x14F00000</div><div class="t" style="top:747.94px;color:#d8f0d8;left:631px;width:60px;text-align:center;font-size:14px;letter-spacing:0.2px">0x18</div><div class="t" style="top:747.94px;color:#d8f0d8;left:700px;font-size:12.5px;margin-top:0.5px;letter-spacing:0.2px">USB3</div><div class="t" style="top:747.94px;color:#d8f0d8;left:780px;margin-top:1.1px"><svg width="7" height="11" viewBox="0 0 7 11" style="display:block"><path d="M1.1 4.3 L3.5 1.6 L5.9 4.3 M1.1 7.1 L3.5 9.8 L5.9 7.1" fill="none" stroke="currentColor" stroke-width="1.5"/></svg></div><div class="t" style="top:747.94px;color:#d8f0d8;left:801px;font-size:14px;letter-spacing:0.15px">Unknown</div><div class="t" style="top:747.94px;color:#d8f0d8;left:884px;font-size:14px;letter-spacing:0.15px"></div><div class="a" style="left:116px;top:410px;width:1370px;height:31px;background:#1f1f1f"></div><div class="a" style="left:116px;top:440px;width:1370px;height:1px;background:#1b1b1b"></div><div class="t" style="left:118px;width:179px;text-align:center;top:420px;font-size:12.5px;font-weight:700;color:#f0f0f0">Type</div><div class="a" style="left:295px;top:417px;width:1px;height:18px;background:#4a4a4a"></div><div class="t" style="left:295px;width:230px;text-align:center;top:420px;font-size:12.5px;font-weight:700;color:#f0f0f0">Name</div><div class="a" style="left:525px;top:417px;width:1px;height:18px;background:#4a4a4a"></div><div class="t" style="left:525px;width:106px;text-align:center;top:420px;font-size:12.5px;font-weight:700;color:#f0f0f0">Location ID</div><div class="a" style="left:631px;top:417px;width:1px;height:18px;background:#4a4a4a"></div><div class="t" style="left:631px;width:60px;text-align:center;top:420px;font-size:12.5px;font-weight:700;color:#f0f0f0">Port</div><div class="a" style="left:691px;top:417px;width:1px;height:18px;background:#4a4a4a"></div><div class="t" style="left:691px;width:106px;text-align:center;top:420px;font-size:12.5px;font-weight:700;color:#f0f0f0">Connector</div><div class="a" style="left:797px;top:417px;width:1px;height:18px;background:#4a4a4a"></div><div class="t" style="left:797px;width:83px;text-align:center;top:420px;font-size:12.5px;font-weight:700;color:#f0f0f0">Dev Speed</div><div class="a" style="left:880px;top:417px;width:1px;height:18px;background:#4a4a4a"></div><div class="t" style="left:886px;top:420px;font-size:12.5px;font-weight:700;color:#f0f0f0">Device</div><div class="a" style="left:1110px;top:417px;width:1px;height:18px;background:#4a4a4a"></div><div class="t" style="left:1117px;top:420px;font-size:12.5px;font-weight:700;color:#f0f0f0">Comment</div><div class="a" style="left:1485px;top:417px;width:1px;height:18px;background:#4a4a4a"></div><div class="a" style="left:116px;top:592.90px;width:1370px;height:1px;background:rgba(10,12,18,.75)"></div><div class="a" style="left:116px;top:614.50px;width:1370px;height:1px;background:rgba(10,12,18,.75)"></div><div class="a" style="left:116px;top:615.50px;width:1370px;height:1px;background:#2e5533"></div><div class="a" style="left:116px;top:722.50px;width:1370px;height:1px;background:rgba(10,12,18,.75)"></div><div class="a" style="left:116px;top:723.50px;width:1370px;height:1px;background:#2e5533"></div><div class="a" style="left:116px;top:441px;width:1370px;height:1px;background:#2e4532"></div><div class="a" style="left:1412px;top:1015.6px;width:14.4px;height:14.4px;border-radius:50%;background:#34d64f;box-shadow:0 0 0 1px rgba(0,0,0,.6)"></div><div class="t" style="left:1434px;top:1019.8px;font-size:10.4px;letter-spacing:-0.4px;font-weight:700;color:#e6e6e6;-webkit-text-stroke:0">Active Port</div><svg class="a" style="left:0;top:1040px" width="1600" height="60" viewBox="0 1040 1600 60"><circle cx="504.5" cy="1068.3" r="12.9" fill="none" stroke="#ababab" stroke-width="1.8"/><circle cx="506.4" cy="1061.9" r="2.2" fill="#ababab"/><path d="M500,1068.4 Q502,1066 504.6,1065.7 Q506.6,1065.6 506.2,1067.6 L504.2,1072.6 Q505.4,1072.6 507,1071.9 Q507,1073.6 505.6,1074.6 Q503.6,1076 501.6,1076.1 Q500.2,1076 500.8,1074.2 L502.9,1068.6 Q502.6,1068.2 500.6,1069.4 Z" fill="#ababab"/><rect x="592.4" y="1066" width="20.3" height="5" rx="2" fill="#ababab"/><line x1="708.2" y1="1055" x2="703.6" y2="1065.4" stroke="#ababab" stroke-width="2.6" stroke-linecap="round"/><path d="M700.8,1064.4 L706,1066.6 L706.4,1069.6 L699.2,1066.8 Z" fill="#ababab"/><path d="M698.6,1068.2 L705.8,1070.9 C705.2,1075 704.8,1079 704.2,1083 L701,1083 L700.3,1080.4 L699.6,1082.8 C696.2,1081.8 693.6,1080.2 692.2,1078.8 L691.8,1077.8 L690.8,1078.2 C689.9,1077.6 689.1,1076.8 688.6,1075.6 C692.6,1073.6 696,1071 698.6,1068.2 Z" fill="#ababab"/><circle cx="708.4" cy="1071.1" r="0.9" fill="#ababab"/><circle cx="707.8" cy="1077.4" r="1.3" fill="#ababab"/><circle cx="710.9" cy="1075.6" r="0.9" fill="#ababab"/><path d="M794.5,1059.8 A10.9,10.9 0 0 1 810.5,1071.7" fill="none" stroke="#ababab" stroke-width="3" stroke-linecap="round"/><path d="M789.4,1066.3 A10.9,10.9 0 0 0 805.5,1078.1" fill="none" stroke="#ababab" stroke-width="3" stroke-linecap="round"/><path d="M789.7,1055 L789.7,1062.6 L797,1062.6 Z" fill="#ababab"/><path d="M808.7,1081.5 L808.7,1074.9 L802.3,1074.9 Z" fill="#ababab"/><g transform="translate(882.3,1084.1) rotate(-45) scale(1.06)" fill="#ababab"><rect x="0" y="-0.65" width="10.5" height="1.3"/><rect x="9" y="-1.3" width="3" height="2.6"/><path d="M11.5,-1.8 Q12.2,-3.3 14,-3.3 L29.8,-3.3 L29.8,3.3 L14,3.3 Q12.2,3.3 11.5,1.8 Z"/><rect x="29.6" y="-5.2" width="2" height="10.4" rx="0.6"/><rect x="31" y="-2.1" width="5.6" height="4.2"/><rect x="36" y="-5" width="2.4" height="10" rx="0.6"/><rect x="15.9" y="-2.7" width="1.2" height="2.5" fill="#383838"/><rect x="19.4" y="-2.7" width="1.2" height="2.5" fill="#383838"/><rect x="22.9" y="-2.7" width="1.2" height="2.5" fill="#383838"/><rect x="26.4" y="-2.7" width="1.2" height="2.5" fill="#383838"/></g><rect x="988.2" y="1057.2" width="18.8" height="22" rx="2.6" fill="none" stroke="#ababab" stroke-width="2.4"/><path d="M985,1068.2 L997,1068.2 M993.6,1063.6 L998.2,1068.2 L993.6,1072.8" fill="none" stroke="#2f2f2f" stroke-width="4.8" stroke-linecap="round" stroke-linejoin="round"/><path d="M985,1068.2 L997,1068.2 M993.6,1063.6 L998.2,1068.2 L993.6,1072.8" fill="none" stroke="#ababab" stroke-width="2.4" stroke-linecap="round" stroke-linejoin="round"/><rect x="1082.2" y="1057.2" width="18.8" height="22" rx="2.6" fill="none" stroke="#ababab" stroke-width="2.4"/><path d="M1095.6,1068.2 L1108,1068.2 M1104.4,1063.6 L1109,1068.2 L1104.4,1072.8" fill="none" stroke="#2f2f2f" stroke-width="4.8" stroke-linecap="round" stroke-linejoin="round"/><path d="M1095.6,1068.2 L1108,1068.2 M1104.4,1063.6 L1109,1068.2 L1104.4,1072.8" fill="none" stroke="#ababab" stroke-width="2.4" stroke-linecap="round" stroke-linejoin="round"/></svg><div class="a" style="left:124px;top:1129px;width:100px;height:23px;border-radius:5px;background:#5e5e5e;box-shadow:inset 0 1px 0 rgba(255,255,255,.1),0 0 0 0.5px rgba(0,0,0,.35),0 0.5px 1.5px rgba(0,0,0,.4)"></div><div class="t" style="left:157px;top:1132.5px;font-size:15px;color:#e6e6e6">Website</div><div class="a" style="left:231px;top:1129px;width:73px;height:23px;border-radius:5px;background:#5e5e5e;box-shadow:inset 0 1px 0 rgba(255,255,255,.1),0 0 0 0.5px rgba(0,0,0,.35),0 0.5px 1.5px rgba(0,0,0,.4)"></div><div class="t" style="left:264px;top:1132.5px;font-size:15px;color:#e6e6e6">Star</div><div class="a" style="left:1306px;top:1129px;width:95px;height:23px;border-radius:5px;background:#5e5e5e;box-shadow:inset 0 1px 0 rgba(255,255,255,.1),0 0 0 0.5px rgba(0,0,0,.35),0 0.5px 1.5px rgba(0,0,0,.4)"></div><div class="t" style="left:1340px;top:1133px;font-size:15px;color:#e6e6e6">Donate</div><div class="a" style="left:1407px;top:1129px;width:103px;height:23px;border-radius:5px;background:#5e5e5e;box-shadow:inset 0 1px 0 rgba(255,255,255,.1),0 0 0 0.5px rgba(0,0,0,.35),0 0.5px 1.5px rgba(0,0,0,.4)"></div><div class="t" style="left:1440px;top:1133px;font-size:15px;color:#e6e6e6">Sponsor</div><svg class="a" style="left:0;top:1120px" width="1600" height="40" viewBox="0 1120 1600 40"><defs><linearGradient id="lockg" x1="0" y1="0" x2="0" y2="1"><stop offset="0" stop-color="#ffc65a"/><stop offset="1" stop-color="#f08a1c"/></linearGradient><linearGradient id="shk" x1="0" y1="0" x2="0" y2="1"><stop offset="0" stop-color="#f4f4f4"/><stop offset="1" stop-color="#b8b8b8"/></linearGradient></defs><path d="M102.1,1139 L102.1,1135.6 A4.9,4.9 0 0 1 111.9,1135.6 L111.9,1139" fill="none" stroke="url(#shk)" stroke-width="2.4"/><rect x="98.3" y="1138.6" width="17" height="11.8" rx="1.2" fill="url(#lockg)" stroke="rgba(0,0,0,.5)" stroke-width="0.6"/><rect x="98.3" y="1141.6" width="17" height="0.7" fill="#c96a10" opacity="0.5"/><rect x="98.3" y="1143.8" width="17" height="0.7" fill="#c96a10" opacity="0.5"/><rect x="98.3" y="1146" width="17" height="0.7" fill="#c96a10" opacity="0.5"/><rect x="98.3" y="1148.2" width="17" height="0.7" fill="#c96a10" opacity="0.5"/><circle cx="142.9" cy="1140.8" r="9" fill="#3d6fcb"/><ellipse cx="138.9" cy="1136.8" rx="1.1" ry="0.9" fill="#2c5090"/><ellipse cx="142.9" cy="1136.2" rx="1.1" ry="0.9" fill="#2c5090"/><ellipse cx="146.9" cy="1136.8" rx="1.1" ry="0.9" fill="#2c5090"/><ellipse cx="137.5" cy="1140.8" rx="1.1" ry="0.9" fill="#2c5090"/><ellipse cx="142.9" cy="1140.8" rx="1.1" ry="0.9" fill="#2c5090"/><ellipse cx="148.3" cy="1140.8" rx="1.1" ry="0.9" fill="#2c5090"/><ellipse cx="138.9" cy="1144.8" rx="1.1" ry="0.9" fill="#2c5090"/><ellipse cx="142.9" cy="1145.3999999999999" rx="1.1" ry="0.9" fill="#2c5090"/><ellipse cx="146.9" cy="1144.8" rx="1.1" ry="0.9" fill="#2c5090"/><polygon points="250.00,1133.40 252.65,1138.36 258.18,1139.34 254.28,1143.39 255.05,1148.96 250.00,1146.50 244.95,1148.96 245.72,1143.39 241.82,1139.34 247.35,1138.36" fill="#c8c43a" stroke="#c8c43a" stroke-width="1.4" stroke-linejoin="round"/><circle cx="1325" cy="1141" r="9.1" fill="#35c25b"/><path d="M1327.3,1137.9 Q1326.7,1136.8 1325,1136.8 Q1322.8,1136.8 1322.8,1138.6 Q1322.8,1140.2 1325,1140.8 Q1327.3,1141.4 1327.3,1143.2 Q1327.3,1145.2 1325,1145.2 Q1323.2,1145.2 1322.6,1144" fill="none" stroke="#1d4a2a" stroke-width="1.7" stroke-linecap="round"/><line x1="1325" y1="1135" x2="1325" y2="1136.8" stroke="#1d4a2a" stroke-width="1.6"/><line x1="1325" y1="1145.2" x2="1325" y2="1147" stroke="#1d4a2a" stroke-width="1.6"/><path d="M1425.9,1148.6 C1421,1145 1417.8,1142 1417.8,1138.2 C1417.8,1135.4 1419.8,1133.6 1422,1133.6 C1423.8,1133.6 1425,1134.6 1425.9,1136 C1426.8,1134.6 1428,1133.6 1429.8,1133.6 C1432,1133.6 1434,1135.4 1434,1138.2 C1434,1142 1430.8,1145 1425.9,1148.6 Z" fill="none" stroke="#d35e9c" stroke-width="1.7" stroke-linejoin="round"/></svg><div class="t" style="left:703px;top:1133px;font-size:16.5px;font-weight:700;font-style:italic;color:#8a8a8a;-webkit-text-stroke:0.7px #8a8a8a;transform:scaleX(1.75);transform-origin:0 0">BEN BAKER</div>
</body></html>
